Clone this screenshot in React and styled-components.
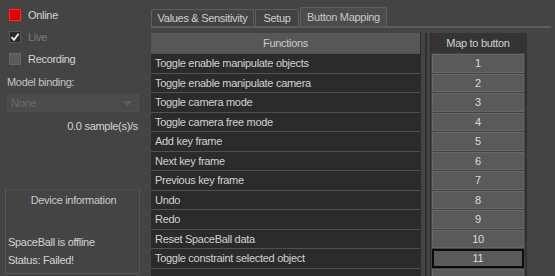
import React from "react";
import styled, { createGlobalStyle } from "styled-components";

const GlobalStyle = createGlobalStyle`
  html, body {
    margin: 0;
    padding: 0;
    background: #444444;
    overflow: hidden;
  }

  body {
    font-family: "Liberation Sans", Arial, sans-serif;
    font-size: 11px;
    letter-spacing: -0.3px;
    color: #d4d4d4;
  }
`;

const Window = styled.div`
  display: flex;
  width: 555px;
  height: 276px;
  overflow: hidden;
  background: #444444;
`;

const SidePanel = styled.aside`
  width: 151px;
  flex-shrink: 0;
  display: flex;
  flex-direction: column;
  padding: 4px 0 2px;
  box-sizing: border-box;
`;

const CheckRow = styled.div`
  display: flex;
  align-items: center;
  gap: 7px;
  height: 22px;
  padding-left: 9px;
  color: ${props => props.$disabled ? "#7a7a7a" : "#d4d4d4"};
`;

const boxColors = {
  red: { bg: "#e50000", border: "#ff2a2a" },
  dark: { bg: "#2a2a2a", border: "#565656" },
  off: { bg: "#5b5b5b", border: "#666666" },
};

const Box = styled.span`
  width: 12px;
  height: 12px;
  box-sizing: border-box;
  display: flex;
  align-items: center;
  justify-content: center;
  background: ${props => boxColors[props.$variant].bg};
  border: 1px solid ${props => boxColors[props.$variant].border};
`;

const FieldLabel = styled.div`
  margin: 5px 0 0 7px;
  line-height: 14px;
  color: #c4c4c4;
`;

const Combo = styled.div`
  margin: 5px 12px 0 7px;
  height: 18px;
  box-sizing: border-box;
  display: flex;
  align-items: center;
  justify-content: space-between;
  padding: 0 6px 0 3px;
  background: #4b4b4b;
  border: 1px solid #4f4f4f;
  color: #6c6c6c;
`;

const Rate = styled.div`
  margin-top: 7px;
  padding-right: 13px;
  text-align: right;
  line-height: 14px;
`;

const InfoGroup = styled.fieldset`
  margin: auto 0 0 5px;
  width: 135px;
  height: 85px;
  box-sizing: border-box;
  padding: 3px 0 0 2px;
  border: 1px solid #575757;
  border-top-color: #4d4d4d;
  min-width: 0;
`;

const InfoTitle = styled.div`
  text-align: center;
  line-height: 14px;
  margin-bottom: 26px;
  color: #cacaca;
`;

const InfoLine = styled.div`
  line-height: 18px;
`;

const Main = styled.main`
  flex: 1;
  min-width: 0;
  display: flex;
  flex-direction: column;
  padding: 7px 4px 0 0;
`;

const TabBar = styled.div`
  display: flex;
  align-items: flex-end;
  gap: 1px;
  height: 19px;
  border-bottom: 2px solid #5c5c5c;
`;

const Tab = styled.div`
  width: ${props => props.$width}px;
  height: ${props => props.$active ? 19 : 17}px;
  box-sizing: border-box;
  display: flex;
  align-items: center;
  justify-content: center;
  white-space: nowrap;
  border: 1px solid #5e5e5e;
  border-bottom: none;
  border-radius: 2px 2px 0 0;
  background: ${props => props.$active ? "#4c4c4c" : "#434343"};
  color: ${props => props.$active ? "#c8c8c8" : "#d0d0d0"};
`;

const TableArea = styled.div`
  display: flex;
  margin-top: 5px;
  flex: 1;
  min-height: 0;
`;

const FuncTable = styled.div`
  width: 269px;
  flex-shrink: 0;
  border-right: 1px solid #2c2c2c;
`;

const FuncHeader = styled.div`
  height: 20px;
  line-height: 20px;
  text-align: center;
  background: #575757;
  color: #cacaca;
`;

const FuncRow = styled.div`
  height: 18.5px;
  line-height: 18.5px;
  padding-left: 4px;
  background: #2b2b2b;
  border-top: 1px solid #505050;
  color: #d2d2d2;
  white-space: nowrap;
`;

const Splitter = styled.div`
  width: 9px;
  display: flex;
  justify-content: center;

  &::before {
    content: "";
    width: 2px;
    background: #303030;
  }
`;

const MapTable = styled.div`
  width: 94px;
  flex-shrink: 0;
  border-left: 1px solid #2e2e2e;
  border-right: 2px solid #333333;
`;

const MapHeader = styled.div`
  height: 20px;
  line-height: 20px;
  text-align: center;
  background: #343434;
  color: #d0d0d0;
`;

const MapButton = styled.div`
  height: 18.5px;
  box-sizing: border-box;
  margin: 1px 1px 0;
  display: flex;
  align-items: center;
  justify-content: center;
  background: #5a5a5a;
  border: ${props => props.$focused ? "2px solid #0c0c0c" : "1px solid #676767"};
  color: #dadada;
`;

const tabs = [
  { label: "Values & Sensitivity", width: 103 },
  { label: "Setup", width: 44 },
  { label: "Button Mapping", width: 87, active: true },
];

const functions = [
  "Toggle enable manipulate objects",
  "Toggle enable manipulate camera",
  "Toggle camera mode",
  "Toggle camera free mode",
  "Add key frame",
  "Next key frame",
  "Previous key frame",
  "Undo",
  "Redo",
  "Reset SpaceBall data",
  "Toggle constraint selected object",
  "",
];

const Check = () => (
  <svg width="10" height="10" viewBox="0 0 10 10">
    <path d="M1.5 5.2 L4 7.8 L8.6 1.8" fill="none" stroke="#f0f0f0" strokeWidth="1.8" />
  </svg>
);

const Arrow = () => (
  <svg width="9" height="5" viewBox="0 0 9 5">
    <path d="M0 0 H9 L4.5 5 Z" fill="#5e5e5e" />
  </svg>
);

export default function App() {
  return (
    <>
      <GlobalStyle />
      <Window>
        <SidePanel>
          <CheckRow>
            <Box $variant="red" />
            Online
          </CheckRow>
          <CheckRow $disabled>
            <Box $variant="dark"><Check /></Box>
            Live
          </CheckRow>
          <CheckRow>
            <Box $variant="off" />
            Recording
          </CheckRow>
          <FieldLabel>Model binding:</FieldLabel>
          <Combo>
            None
            <Arrow />
          </Combo>
          <Rate>0.0 sample(s)/s</Rate>
          <InfoGroup>
            <InfoTitle>Device information</InfoTitle>
            <InfoLine>SpaceBall is offline</InfoLine>
            <InfoLine>Status: Failed!</InfoLine>
          </InfoGroup>
        </SidePanel>
        <Main>
          <TabBar>
            {tabs.map(tab => (
              <Tab key={tab.label} $width={tab.width} $active={tab.active}>
                {tab.label}
              </Tab>
            ))}
          </TabBar>
          <TableArea>
            <FuncTable>
              <FuncHeader>Functions</FuncHeader>
              {functions.map((name, i) => (
                <FuncRow key={i}>{name}</FuncRow>
              ))}
            </FuncTable>
            <Splitter />
            <MapTable>
              <MapHeader>Map to button</MapHeader>
              {functions.map((name, i) => (
                <MapButton key={i} $focused={i === 10}>
                  {name ? i + 1 : ""}
                </MapButton>
              ))}
            </MapTable>
          </TableArea>
        </Main>
      </Window>
    </>
  );
}
